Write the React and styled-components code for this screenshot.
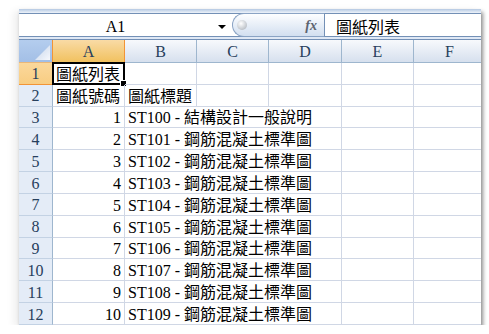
import React from 'react';
import styled, { createGlobalStyle } from 'styled-components';

const GlobalStyle = createGlobalStyle`
  html, body { margin: 0; padding: 0; background: #ffffff; }
  body { font-family: "Liberation Serif", "Noto Sans CJK TC", serif; }
`;

const Page = styled.div`
  padding: 9px 0 0 19px;
`;

const Window = styled.div`
  width: 462px;
  height: 316px;
  overflow: hidden;
  background: #ffffff;
  display: flex;
  flex-direction: column;
  box-shadow: 2px 3px 4px rgba(0, 0, 0, 0.45), -5px 2px 8px rgba(0, 0, 0, 0.07);
`;

const FormulaArea = styled.div`
  padding-top: 4px;
  background: linear-gradient(#b4c8e2, #eef3fa 4px);
`;

const FormulaRow = styled.div`
  display: flex;
  height: 22px;
  border-top: 1px solid #7390b6;
  border-bottom: 1px solid #7390b6;
  background: #ffffff;
`;

const NameBox = styled.div`
  width: 193px;
  display: flex;
  align-items: center;
  justify-content: center;
  padding-top: 3px;
  box-sizing: border-box;
  font-size: 16px;
  color: #000;
`;

const DropButton = styled.div`
  width: 20px;
  display: flex;
  align-items: center;
  justify-content: center;
  padding-top: 3px;
  box-sizing: border-box;
  &::after {
    content: '';
    border-left: 4px solid transparent;
    border-right: 4px solid transparent;
    border-top: 4px solid #000;
  }
`;

const FxPill = styled.div`
  width: 93px;
  height: 24px;
  margin: -1px 0;
  box-sizing: border-box;
  border: 1px solid #8aa3c4;
  border-right-color: #7390b6;
  border-radius: 12px 0 0 12px;
  background: linear-gradient(#fdfeff, #d2dff0);
  display: flex;
  align-items: center;
  justify-content: space-between;
  padding: 0 7px 0 4px;
`;

const Sphere = styled.span`
  width: 10px;
  height: 10px;
  border-radius: 50%;
  background: radial-gradient(circle at 40% 35%, #ffffff, #cdd1d6 55%, #a2a8b0);
`;

const Fx = styled.span`
  font-family: "Liberation Serif", serif;
  font-style: italic;
  font-weight: bold;
  font-size: 14px;
  color: #5d6470;
  padding-top: 1px;
`;

const FormulaInput = styled.div`
  flex: 1;
  display: flex;
  align-items: center;
  padding-left: 11px;
  padding-top: 2px;
  font-size: 16px;
  color: #000;
`;

const Strip = styled.div`
  height: 2px;
  background: #dfe8f5;
  border-bottom: 1px solid #7390b6;
`;

const Sheet = styled.div`
  display: grid;
  grid-template-columns: 34px 72px 72px 72px 73px 72px 72px;
  grid-template-rows: 23px;
  grid-auto-rows: 21.84px;
`;

const orange = '#f29436';

const Corner = styled.div`
  position: relative;
  box-sizing: border-box;
  background: linear-gradient(#b4cdee, #a3bfe6);
  border-right: 1px solid ${orange};
  border-bottom: 1px solid #e9b77a;
  &::after {
    content: '';
    position: absolute;
    right: 2px;
    bottom: 2px;
    width: 15px;
    height: 15px;
    background: linear-gradient(135deg, #c3d3ea, #f6f8fc);
    clip-path: polygon(100% 0, 100% 100%, 0 100%);
  }
`;

const ColHeader = styled.div`
  box-sizing: border-box;
  display: flex;
  align-items: center;
  justify-content: center;
  padding-top: 2px;
  font-size: 16px;
  color: #27405d;
  background: ${(p) =>
    p.$selected ? 'linear-gradient(#f9dba6, #f1c15f)' : 'linear-gradient(#f7f9fc, #d6e0ee)'};
  border-right: 1px solid ${(p) => (p.$selected ? orange : '#9eb6ce')};
  border-bottom: 1px solid ${(p) => (p.$selected ? orange : '#9eb6ce')};
`;

const RowHeader = styled.div`
  box-sizing: border-box;
  display: flex;
  align-items: center;
  justify-content: center;
  padding-top: 2px;
  font-size: 16px;
  color: #27405d;
  background: ${(p) => (p.$selected ? 'linear-gradient(#fbd89c, #f8cd82)' : '#e4ecf7')};
  border-right: 1px solid ${(p) => (p.$selected ? orange : '#9eb6ce')};
  border-bottom: 1px solid ${(p) => (p.$selected ? orange : '#c3d2e4')};
`;

const Cell = styled.div`
  position: relative;
  box-sizing: border-box;
  grid-column: span ${(p) => p.$span || 1};
  border-right: 1px solid #d0d7e5;
  border-bottom: 1px solid #d0d7e5;
  display: flex;
  align-items: flex-end;
  justify-content: ${(p) => (p.$align === 'right' ? 'flex-end' : 'flex-start')};
  padding: 0 3px 0 3px;
  font-size: 16px;
  line-height: 19px;
  white-space: nowrap;
  color: #000;
`;

const SelectionBox = styled.span`
  position: absolute;
  top: -1px;
  left: -1px;
  right: -1px;
  bottom: -1px;
  border: 2px solid #000;
  pointer-events: none;
`;

const FillHandle = styled.span`
  position: absolute;
  right: -3px;
  bottom: -3px;
  width: 5px;
  height: 5px;
  background: #000;
  border: 1px solid #fff;
`;

const columns = ['A', 'B', 'C', 'D', 'E', 'F'];

const drawings = [
  'ST100 - 結構設計一般說明',
  'ST101 - 鋼筋混凝土標準圖',
  'ST102 - 鋼筋混凝土標準圖',
  'ST103 - 鋼筋混凝土標準圖',
  'ST104 - 鋼筋混凝土標準圖',
  'ST105 - 鋼筋混凝土標準圖',
  'ST106 - 鋼筋混凝土標準圖',
  'ST107 - 鋼筋混凝土標準圖',
  'ST108 - 鋼筋混凝土標準圖',
  'ST109 - 鋼筋混凝土標準圖',
];

export default function App() {
  return (
    <>
      <GlobalStyle />
      <Page>
        <Window>
          <FormulaArea>
            <FormulaRow>
              <NameBox>A1</NameBox>
              <DropButton />
              <FxPill>
                <Sphere />
                <Fx>fx</Fx>
              </FxPill>
              <FormulaInput>圖紙列表</FormulaInput>
            </FormulaRow>
            <Strip />
          </FormulaArea>
          <Sheet>
            <Corner />
            {columns.map((c) => (
              <ColHeader key={c} $selected={c === 'A'}>
                {c}
              </ColHeader>
            ))}

            <RowHeader $selected>1</RowHeader>
            <Cell>
              圖紙列表
              <SelectionBox />
              <FillHandle />
            </Cell>
            <Cell />
            <Cell />
            <Cell />
            <Cell />
            <Cell />

            <RowHeader>2</RowHeader>
            <Cell>圖紙號碼</Cell>
            <Cell>圖紙標題</Cell>
            <Cell />
            <Cell />
            <Cell />
            <Cell />

            {drawings.map((title, i) => (
              <React.Fragment key={title + i}>
                <RowHeader>{i + 3}</RowHeader>
                <Cell $align="right">{i + 1}</Cell>
                <Cell $span={3}>{title}</Cell>
                <Cell />
                <Cell />
              </React.Fragment>
            ))}
          </Sheet>
        </Window>
      </Page>
    </>
  );
}
